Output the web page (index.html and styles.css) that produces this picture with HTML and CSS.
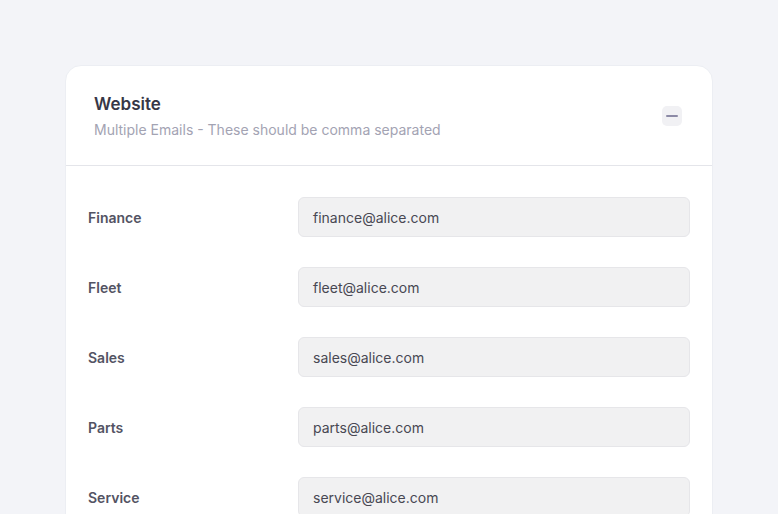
FILE: index.html
```html
<!DOCTYPE html>
<html>
<head>
<meta charset="utf-8">
<link rel="stylesheet" href="styles.css">
</head>
<body>
<div class="page">
  <section class="card">
    <header class="card-head">
      <div class="head-text">
        <h2 class="title">Website</h2>
        <p class="subtitle">Multiple Emails - These should be comma separated</p>
      </div>
      <button class="collapse" aria-label="Collapse"><span class="minus"></span></button>
    </header>
    <div class="card-body">
      <div class="row"><label class="label">Finance</label><div class="input">finance@alice.com</div></div>
      <div class="row"><label class="label">Fleet</label><div class="input">fleet@alice.com</div></div>
      <div class="row"><label class="label">Sales</label><div class="input">sales@alice.com</div></div>
      <div class="row"><label class="label">Parts</label><div class="input">parts@alice.com</div></div>
      <div class="row"><label class="label">Service</label><div class="input">service@alice.com</div></div>
    </div>
  </section>
</div>
</body>
</html>
```
FILE: styles.css
```css
* { box-sizing: border-box; }
html, body { margin: 0; padding: 0; }
body {
  background: #f3f4f8;
  font-family: Inter, "Noto Sans", sans-serif;
  height: 514px;
  overflow: hidden;
}
.page {
  padding: 65px 65px 0 65px;
}
.card {
  background: #ffffff;
  border-radius: 16px;
  border: 1px solid #eceef3;
  width: 648px;
  padding-bottom: 60px;
}
.card-head {
  display: flex;
  align-items: center;
  justify-content: space-between;
  padding: 26px 30px 25px 28px;
  border-bottom: 1px solid #e4e5ea;
}
.title {
  margin: 0;
  font-size: 17px;
  line-height: 24px;
  font-weight: 600;
  color: #373747;
}
.subtitle {
  margin: 4px 0 0 0;
  font-size: 14px;
  line-height: 20px;
  color: #a3a3b3;
}
.collapse {
  width: 20px;
  height: 20px;
  border: none;
  padding: 0;
  border-radius: 5px;
  background: #f1f1f4;
  display: flex;
  align-items: center;
  justify-content: center;
}
.minus {
  width: 12px;
  height: 2px;
  border-radius: 1px;
  background: #8c8aa6;
}
.card-body {
  padding: 31px 22px 0 22px;
  display: flex;
  flex-direction: column;
  gap: 30px;
}
.row {
  display: grid;
  grid-template-columns: 210px 1fr;
  align-items: center;
}
.label {
  font-size: 14px;
  font-weight: 600;
  color: #535363;
}
.input {
  height: 40px;
  background: #f1f1f2;
  border: 1px solid #e6e6e9;
  border-radius: 6px;
  padding: 0 14px;
  display: flex;
  align-items: center;
  font-size: 14px;
  color: #484853;
}
```
